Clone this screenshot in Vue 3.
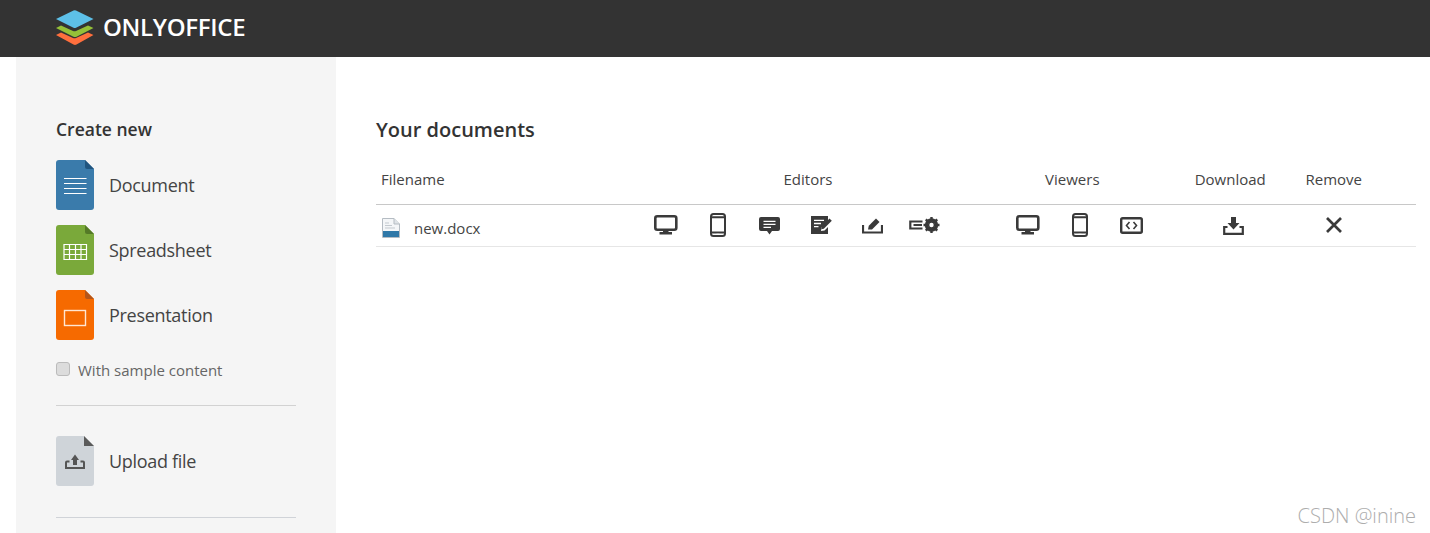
<script setup>
const items = [
  { name: 'Document', cls: 'doc' },
  { name: 'Spreadsheet', cls: 'sheet' },
  { name: 'Presentation', cls: 'pres' },
]
</script>

<template>
  <div class="page">
    <header class="top">
      <svg class="logo" width="40" height="36" viewBox="0 0 40 36">
        <path d="M1 25 6 22.500 18 28a4 4 0 0 0 3 0L33 22.500 38.500 25 21.500 34.600a4 4 0 0 1-3 0Z" fill="#ff6f3d" />
        <path d="M1 18 6 15.500 18 21a4 4 0 0 0 3 0L33 15.500 38.500 18 21.500 26.800a4 4 0 0 1-3 0Z" fill="#95c038" />
        <path d="M1 9 18.500.6a3 3 0 0 1 2.500 0L38.500 9 21 17.800a3 3 0 0 1-2.500 0Z" fill="#5dc0e8" />
      </svg>
      <span class="brand">ONLYOFFICE</span>
    </header>
    <div class="body">
      <aside class="side">
        <h2 class="create">Create new</h2>
        <div class="files">
          <a v-for="it in items" :key="it.name" class="file">
            <svg width="38" height="50" viewBox="0 0 38 50">
              <template v-if="it.cls === 'doc'">
                <path d="M3 0H29L38 9V47a3 3 0 0 1-3 3H3a3 3 0 0 1-3-3V3a3 3 0 0 1 3-3Z" fill="#3a7bab" />
                <path d="M29 0 38 9H31a2 2 0 0 1-2-2Z" fill="#20557f" />
                <path d="M8 18.500H30.500M8 23.500H30.500M8 28.500H30.500M8 33.500H30.500" stroke="#fff" stroke-width="1.200" fill="none" />
              </template>
              <template v-else-if="it.cls === 'sheet'">
                <path d="M3 0H29L38 9V47a3 3 0 0 1-3 3H3a3 3 0 0 1-3-3V3a3 3 0 0 1 3-3Z" fill="#7aa93a" />
                <path d="M29 0 38 9H31a2 2 0 0 1-2-2Z" fill="#557a27" />
                <path d="M8 19.500H30.500V34.500H8ZM8 24.500H30.500M8 29.500H30.500M13.500 19.500V34.500M19.500 19.500V34.500M25 19.500V34.500" stroke="#fff" stroke-width="1.200" fill="none" />
              </template>
              <template v-else>
                <path d="M3 0H29L38 9V47a3 3 0 0 1-3 3H3a3 3 0 0 1-3-3V3a3 3 0 0 1 3-3Z" fill="#f66a00" />
                <path d="M29 0 38 9H31a2 2 0 0 1-2-2Z" fill="#b4561a" />
                <rect x="8.500" y="20.500" width="21" height="15" stroke="#ffe6d2" stroke-width="1.400" fill="none" />
              </template>
            </svg>
            <span>{{ it.name }}</span>
          </a>
        </div>
        <label class="sample">
          <input type="checkbox" class="check" />
          <span>With sample content</span>
        </label>
        <hr class="rule first" />
        <a class="file">
          <svg width="38" height="50" viewBox="0 0 38 50">
            <path d="M3 0H28L38 10V47a3 3 0 0 1-3 3H3a3 3 0 0 1-3-3V3a3 3 0 0 1 3-3Z" fill="#cfd4d9" />
            <path d="M28 0 38 10H28Z" fill="#5a5a5a" />
            <path d="M13.500 25.500H11a1 1 0 0 0-1 1V32H28V26.500a1 1 0 0 0-1-1H24.500" stroke="#555" stroke-width="2" fill="none" />
            <path d="M15 24 19 18.500 23 24H21V29H17V24Z" fill="#555" />
          </svg>
          <span>Upload file</span>
        </a>
        <hr class="rule last" />
      </aside>
      <main class="main">
        <h1 class="title">Your documents</h1>
        <div class="grid head">
          <div class="c-name">Filename</div>
          <div class="c-ed">Editors</div>
          <div class="c-vi">Viewers</div>
          <div class="c-dl">Download</div>
          <div class="c-rm">Remove</div>
        </div>
        <div class="grid row">
          <div class="c-file">
            <svg width="18" height="20" viewBox="0 0 18 20">
              <path d="M.5.500H12L17.500 6V19.500H.5Z" fill="#f4f6f8" stroke="#b5bcc3" />
              <path d="M12 .5V6H17.500" fill="#dfe3e7" stroke="#b5bcc3" />
              <rect x="1" y="13" width="16" height="6" fill="#2f78a8" />
              <path d="M3 5H7M3 7.500H10M3 10H13" stroke="#c3c9cf" />
            </svg>
            <span>new.docx</span>
          </div>
          <div class="ico">
            <svg width="24" height="20" viewBox="0 0 24 20"><rect x="1.300" y="1.300" width="21" height="13.400" rx="2" fill="none" stroke="#3a3a3a" stroke-width="2.600" /><path d="M9 15V17H5.500V19.500H18V17H14.500V15Z" fill="#3a3a3a" /></svg>
          </div>
          <div class="ico">
            <svg width="16" height="24" viewBox="0 0 16 24"><rect x="1" y="1" width="14" height="22" rx="2.500" fill="none" stroke="#3a3a3a" stroke-width="2" /><path d="M1.500 4.200H14.500M1.500 19.500H14.500" stroke="#3a3a3a" stroke-width="2" /><path d="M6.500 21.300H9.500" stroke="#fff" stroke-width="1" /></svg>
          </div>
          <div class="ico">
            <svg class="nudge" width="21" height="18" viewBox="0 0 21 18"><path d="M2 0H19a2 2 0 0 1 2 2V12a2 2 0 0 1-2 2H13L10.500 17.500 8 14H2a2 2 0 0 1-2-2V2A2 2 0 0 1 2 0Z" fill="#3a3a3a" /><path d="M4.500 4.300H16.500M4.500 7.300H16.500M4.500 10.300H12" stroke="#fff" stroke-width="1.200" /></svg>
          </div>
          <div class="ico">
            <svg width="21" height="18" viewBox="0 0 21 18"><path d="M0 0H17V5L10.500 11.500 10 15 13.500 14.500 17 11V18H0Z" fill="#3a3a3a" /><path d="M3 4.300H13M3 7.500H10M3 10.700H7.500" stroke="#fff" stroke-width="1.300" /><path d="M18.500 2.500 20.800 4.800 12.800 12.800 10.200 13.300 10.700 10.500Z" fill="#3a3a3a" /></svg>
          </div>
          <div class="ico">
            <svg class="nudge" width="21" height="17" viewBox="0 0 21 17"><path d="M1 8V15.500H20V8" fill="none" stroke="#3a3a3a" stroke-width="2.200" /><path d="M6 12.500 6.800 8.800 14 1.500 17.500 5 10 12.500Z" fill="#3a3a3a" /></svg>
          </div>
          <div class="ico">
            <svg width="31" height="18" viewBox="0 0 31 18"><path d="M13.500 5.500H1.300V12.500H13.500M4.500 9H13" fill="none" stroke="#3a3a3a" stroke-width="2.200" /><circle cx="22.500" cy="9" r="5" fill="none" stroke="#3a3a3a" stroke-width="3.400" /><path d="M22.500 1V17M14.500 9H30.500M16.800 3.300 28.200 14.700M28.200 3.300 16.800 14.700" stroke="#3a3a3a" stroke-width="2.400" /><circle cx="22.500" cy="9" r="2.200" fill="#fff" /></svg>
          </div>
          <div class="ico v1">
            <svg width="24" height="20" viewBox="0 0 24 20"><rect x="1.300" y="1.300" width="21" height="13.400" rx="2" fill="none" stroke="#3a3a3a" stroke-width="2.600" /><path d="M9 15V17H5.500V19.500H18V17H14.500V15Z" fill="#3a3a3a" /></svg>
          </div>
          <div class="ico">
            <svg width="16" height="24" viewBox="0 0 16 24"><rect x="1" y="1" width="14" height="22" rx="2.500" fill="none" stroke="#3a3a3a" stroke-width="2" /><path d="M1.500 4.200H14.500M1.500 19.500H14.500" stroke="#3a3a3a" stroke-width="2" /><path d="M6.500 21.300H9.500" stroke="#fff" stroke-width="1" /></svg>
          </div>
          <div class="ico">
            <svg width="23" height="17" viewBox="0 0 23 17"><rect x="1.200" y="1.200" width="20.600" height="14.600" rx="1.500" fill="none" stroke="#3a3a3a" stroke-width="2.400" /><path d="M9.500 5 6.500 8.500 9.500 12M13.500 5 16.500 8.500 13.500 12" fill="none" stroke="#3a3a3a" stroke-width="1.600" /></svg>
          </div>
          <div class="ico dl">
            <svg width="21" height="18" viewBox="0 0 21 18"><path d="M4.500 10H1.200V16.800H19.800V10H16.500" fill="none" stroke="#3a3a3a" stroke-width="2.200" /><path d="M8 0H13V6H16.500L10.500 12.500 4.500 6H8Z" fill="#3a3a3a" /></svg>
          </div>
          <div class="ico">
            <svg width="18" height="18" viewBox="0 0 18 18"><path d="M2 2 16 16M16 2 2 16" stroke="#3a3a3a" stroke-width="2.700" /></svg>
          </div>
        </div>
      </main>
    </div>
    <div class="mark">CSDN @inine</div>
  </div>
</template>

<style>
html, body { margin: 0; background: #fff; overflow: hidden; }
</style>

<style scoped>
.page {
  position: relative;
  height: 533px;
  overflow: hidden;
  font-family: "Open Sans", sans-serif;
  color: #333;
  background: #fff;
}
.top {
  height: 57px;
  background: #333;
  display: flex;
  align-items: center;
  padding-left: 55px;
  box-sizing: border-box;
}
.logo { margin-top: -2px; }
.brand {
  margin-left: 8px;
  margin-top: -4px;
  color: #fff;
  font-size: 24px;
  font-weight: 600;
  letter-spacing: -0.3px;
}
.body { display: flex; padding-left: 16px; }
.side {
  width: 320px;
  height: 476px;
  background: #f5f5f5;
  padding: 60px 40px 0;
  box-sizing: border-box;
  flex: none;
}
.create {
  margin: 0;
  font-size: 17.5px;
  line-height: 24px;
  font-weight: 600;
}
.files {
  margin-top: 19px;
  display: flex;
  flex-direction: column;
  gap: 15px;
}
.file {
  display: flex;
  align-items: center;
  gap: 15px;
  height: 50px;
  font-size: 18px;
  letter-spacing: -0.3px;
  color: #444;
}
.sample {
  display: flex;
  align-items: center;
  margin-top: 20px;
  height: 20px;
  font-size: 15px;
  color: #666;
  gap: 8px;
}
.check {
  appearance: none;
  width: 14px;
  height: 14px;
  margin: -2px 0 0;
  background: #dcdcdc;
  border: 1px solid #bbb;
  border-radius: 3px;
  box-sizing: border-box;
}
.rule {
  margin: 0;
  border: 0;
  border-top: 1px solid #d2d2d2;
  width: 240px;
}
.rule.first { margin-top: 25px; margin-bottom: 30px; }
.rule.last { margin-top: 31px; border-top-color: #d0d3d8; }
.main { flex: 1; padding: 61px 14px 0 40px; min-width: 0; }
.title {
  margin: 0;
  font-size: 20px;
  line-height: 24px;
  font-weight: 600;
}
.grid {
  display: grid;
  grid-template-columns: 264px repeat(6, 51.6px) 26.4px 26px repeat(3, 51.6px) 152px 50px 1fr;
  font-size: 15px;
  color: #444;
}
.head {
  margin-top: 24px;
  height: 38px;
  padding-bottom: 12px;
  box-sizing: border-box;
  align-items: center;
}
.c-name { padding-left: 5px; grid-column: 1; }
.c-ed { grid-column: 2 / span 7; text-align: center; }
.c-vi { grid-column: 9 / span 4; text-align: center; padding-left: 12px; }
.c-dl { grid-column: 13; text-align: center; padding-right: 5px; }
.c-rm { grid-column: 14; text-align: center; white-space: nowrap; justify-self: center; }
.row {
  height: 43px;
  box-sizing: border-box;
  border-top: 1px solid #c8c8c8;
  border-bottom: 1px solid #e6e6e6;
  align-items: center;
}
.c-file {
  display: flex;
  align-items: center;
  gap: 14px;
  padding-left: 6px;
  padding-top: 4px;
}
.ico {
  display: flex;
  justify-content: center;
  align-items: center;
  margin-top: -1px;
  padding-left: 1px;
}
.nudge { margin-top: 1px; }
.v1 { grid-column: 10; }
.dl { margin-top: 0; }
.mark {
  position: absolute;
  right: 14px;
  bottom: 4px;
  font-size: 20px;
  color: #adadad;
  font-weight: 300;
}
</style>
